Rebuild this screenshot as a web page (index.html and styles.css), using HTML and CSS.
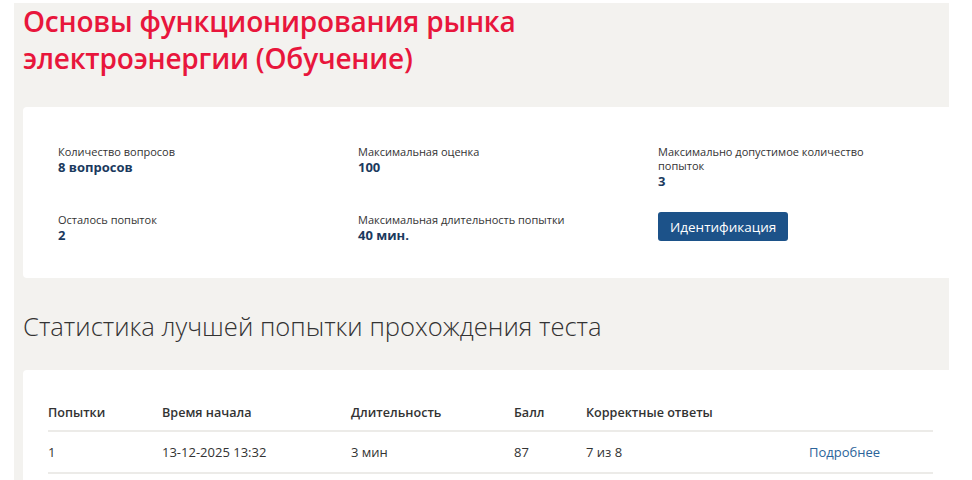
FILE: index.html
```html
<!DOCTYPE html>
<html lang="ru">
<head>
<meta charset="utf-8">
<title>Основы функционирования рынка электроэнергии</title>
<link rel="stylesheet" href="styles.css">
</head>
<body>
<div class="page">
  <h1 class="title">Основы функционирования рынка<br>электроэнергии (Обучение)</h1>
  <section class="card info">
    <div class="item">
      <div class="label">Количество вопросов</div>
      <div class="value">8 вопросов</div>
    </div>
    <div class="item">
      <div class="label">Максимальная оценка</div>
      <div class="value">100</div>
    </div>
    <div class="item narrow">
      <div class="label">Максимально допустимое количество попыток</div>
      <div class="value">3</div>
    </div>
    <div class="item">
      <div class="label">Осталось попыток</div>
      <div class="value">2</div>
    </div>
    <div class="item">
      <div class="label">Максимальная длительность попытки</div>
      <div class="value">40 мин.</div>
    </div>
    <div class="item">
      <button class="btn">Идентификация</button>
    </div>
  </section>
  <h2 class="subtitle">Статистика лучшей попытки прохождения теста</h2>
  <section class="card stats">
    <table class="table">
      <thead>
        <tr>
          <th class="c1">Попытки</th>
          <th class="c2">Время начала</th>
          <th class="c3">Длительность</th>
          <th class="c4">Балл</th>
          <th class="c5">Корректные ответы</th>
          <th class="c6"></th>
        </tr>
      </thead>
      <tbody>
        <tr>
          <td>1</td>
          <td>13-12-2025 13:32</td>
          <td>3 мин</td>
          <td>87</td>
          <td>7 из 8</td>
          <td><a class="link" href="#">Подробнее</a></td>
        </tr>
      </tbody>
    </table>
  </section>
</div>
</body>
</html>
```

FILE: styles.css
```css
html, body {
  margin: 0;
  padding: 0;
  background: #ffffff;
  font-family: "Open Sans", "Noto Sans", sans-serif;
  color: #333333;
}

.page {
  margin: 6px 23px 0 14px;
  padding: 0 0 40px 9px;
  background: #f3f2ef;
  min-height: 480px;
}

.title {
  margin: -3px 0 0 0;
  padding: 0;
  font-family: "Open Sans", sans-serif;
  font-weight: 600;
  font-size: 28px;
  line-height: 37px;
  color: #e8163c;
  letter-spacing: -0.2px;
}

.card {
  background: #ffffff;
  border-radius: 4px 0 0 4px;
}

.info {
  margin-top: 30px;
  height: 171px;
  box-sizing: border-box;
  padding: 38px 0 0 35px;
  display: grid;
  grid-template-columns: 300px 300px 300px;
  row-gap: 24px;
  align-content: start;
}

.item {
  min-height: 40px;
}

.narrow {
  max-width: 225px;
}

.label {
  font-size: 11px;
  line-height: 14px;
  color: #333333;
}

.value {
  font-size: 13px;
  line-height: 16px;
  font-weight: 700;
  color: #1b3a5e;
}

.btn {
  margin-top: -1px;
  height: 29px;
  padding: 0 12px;
  border: 0;
  border-radius: 3px;
  background: #1c5289;
  color: #ffffff;
  font-family: "Open Sans", sans-serif;
  font-size: 13.5px;
  font-weight: 500;
}

.subtitle {
  margin: 0;
  padding: 34px 0 0 0;
  height: 58px;
  font-weight: 300;
  font-size: 25.6px;
  line-height: 30px;
  color: #333333;
}

.stats {
  margin-top: 0;
  padding: 29px 16px 10px 25px;
}

.table {
  width: 885px;
  border-collapse: collapse;
  font-size: 13px;
}

.table th {
  text-align: left;
  font-weight: 600;
  font-size: 12.6px;
  padding: 6px 0 9px 0;
  border-bottom: 2px solid #ecebe8;
  line-height: 16px;
}

.table td {
  padding: 12px 0 12px 0;
  line-height: 16px;
  border-bottom: 2px solid #ecebe8;
}

.c1 { width: 114px; }
.c2 { width: 189px; }
.c3 { width: 163px; }
.c4 { width: 72px; }
.c5 { width: 223px; }

.link {
  color: #2b649a;
  text-decoration: none;
}
```
